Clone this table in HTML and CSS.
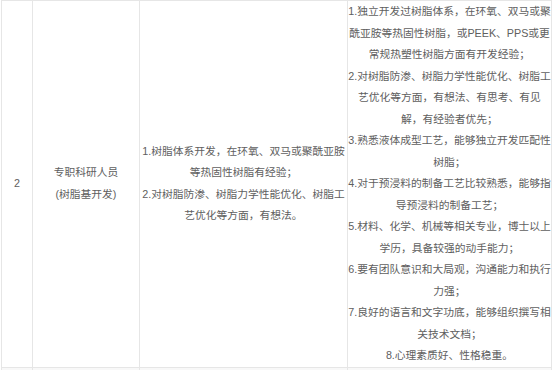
FILE: index.html
```html
<!DOCTYPE html>
<html lang="zh">
<head>
<meta charset="utf-8">
<link rel="stylesheet" href="styles.css">
</head>
<body>
<table class="jobs">
  <colgroup>
    <col class="c-no">
    <col class="c-title">
    <col class="c-duty">
    <col class="c-req">
  </colgroup>
  <tr>
    <td class="no">2</td>
    <td class="title">专职科研人员<br>(树脂基开发)</td>
    <td class="duty">1.树脂体系开发，在环氧、双马或聚酰亚胺等热固性树脂有经验；<br>2.对树脂防渗、树脂力学性能优化、树脂工艺优化等方面，有想法。</td>
    <td class="req">1.独立开发过树脂体系，在环氧、双马或聚酰亚胺等热固性树脂，或PEEK、PPS或更常规热塑性树脂方面有开发经验；<br>2.对树脂防渗、树脂力学性能优化、树脂工艺优化等方面，有想法、有思考、有见解，有经验者优先；<br>3.熟悉液体成型工艺，能够独立开发匹配性树脂；<br>4.对于预浸料的制备工艺比较熟悉，能够指导预浸料的制备工艺；<br>5.材料、化学、机械等相关专业，博士以上学历，具备较强的动手能力；<br>6.要有团队意识和大局观，沟通能力和执行力强；<br>7.良好的语言和文字功底，能够组织撰写相关技术文档；<br>8.心理素质好、性格稳重。</td>
  </tr>
  <tr class="next">
    <td></td><td></td><td></td><td></td>
  </tr>
</table>
</body>
</html>
```

FILE: styles.css
```css
html, body {
  margin: 0;
  padding: 0;
  background: #fff;
}
body {
  padding-left: 1px;
  font-family: "Liberation Sans", "Noto Sans CJK SC", sans-serif;
  font-size: 10.75px;
  line-height: 21.5px;
  color: #606060;
}
.jobs {
  border-collapse: collapse;
  table-layout: fixed;
  width: 551px;
}
.c-no { width: 31px; }
.c-title { width: 107px; }
.c-duty { width: 208px; }
.c-req { width: 204px; }
.jobs td {
  border: 1px solid #e6e6e6;
  text-align: center;
  vertical-align: middle;
  padding: 0;
}
.jobs .next td {
  height: 6px;
  background: #f8f8f8;
}
```
